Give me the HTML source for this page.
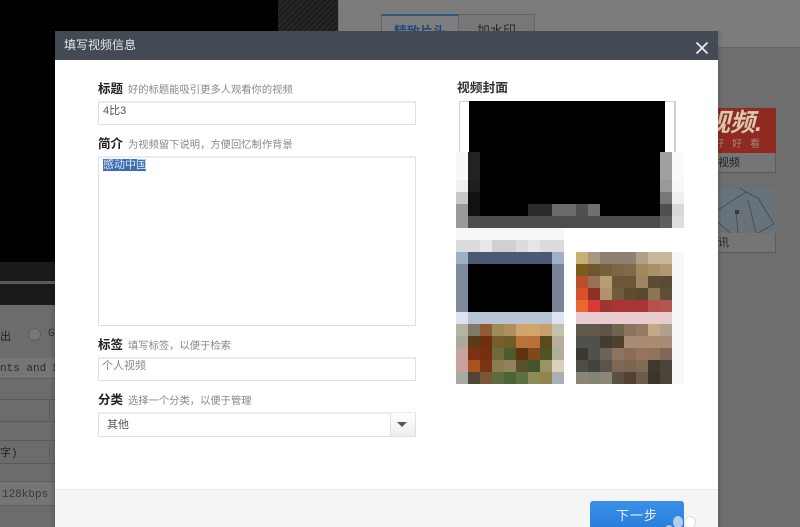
<!DOCTYPE html>
<html><head><meta charset="utf-8"><style>
html,body{margin:0;padding:0;width:800px;height:527px;overflow:hidden;background:#6e6e6e}
*{box-sizing:border-box}
body{font-family:"Liberation Sans","WenQuanYi Zen Hei","Noto Sans CJK SC",sans-serif}
#w{position:relative;width:800px;height:527px;overflow:hidden}
.a{position:absolute}
.lbl{position:absolute;left:98px;font-size:12.5px;line-height:16px;font-weight:bold;color:#222;white-space:nowrap;font-family:"Liberation Sans","Noto Sans CJK SC",sans-serif}
.hint{position:absolute;font-size:10.3px;line-height:14px;color:#888;white-space:nowrap}
.box{position:absolute;left:98px;width:318px;background:#fff;border:1px solid #e0e0e0;border-top:2px solid #ececec;font-size:11px;color:#555}
.mono{font-family:"Liberation Mono","WenQuanYi Zen Hei",monospace;font-size:11px;color:#2a2a2a;white-space:nowrap}
</style></head><body><div id="w">
<!-- background -->
<div class="a" style="left:0;top:0;width:800px;height:47px;background:#7c7c7c"></div>
<div class="a" style="left:338px;top:47px;width:462px;height:1px;background:#666"></div>
<div class="a" style="left:0;top:0;width:278px;height:262px;background:#000"></div>
<div class="a" style="left:278px;top:0;width:60px;height:262px;background:repeating-linear-gradient(135deg,#1c1c1c 0 2px,#262626 2px 4px)"></div>
<div class="a" style="left:338px;top:0;width:1px;height:48px;background:#6e6e6e"></div>
<div class="a" style="left:0;top:262px;width:338px;height:43px;background:#1a1a1c"></div>
<div class="a" style="left:0;top:281px;width:338px;height:3px;background:#5a5a5a"></div>
<div class="a" style="left:381px;top:14px;width:78px;height:34px;border:1px solid #666;border-top:2px solid #2f5a86;background:#7e7e7e;text-align:center;font-size:13px;line-height:32px;color:#1f4a78;font-weight:bold">精致片头</div>
<div class="a" style="left:459px;top:14px;width:76px;height:34px;border:1px solid #666;border-left:0;background:#777;text-align:center;font-size:13px;line-height:32px;color:#2a2a2a">加水印</div>
<!-- right cards -->
<div class="a" style="left:718px;top:108px;width:58px;height:45px;background:#8e2a20;overflow:hidden"><div class="a" style="left:-13px;top:-1px;color:#d9c9b0;font-size:25px;font-style:italic;font-weight:bold;line-height:32px;white-space:nowrap">视频.</div><div class="a" style="left:-4px;top:31px;font-size:10px;line-height:12px;letter-spacing:8px;color:#b08078;white-space:nowrap">好好看</div></div>
<div class="a" style="left:718px;top:153px;width:58px;height:20px;background:#757575;border-bottom:1px solid #5c5c5c;border-right:1px solid #5c5c5c;font-size:11px;line-height:21px;color:#222">视频</div>
<div class="a" style="left:718px;top:188px;width:58px;height:45px;background:#68727a"></div>
<svg class="a" style="left:718px;top:188px" width="58" height="45"><path d="M0 22L28 4L40 10L56 36L40 45M22 0L28 4M18 24L20 45M30 12L38 45M0 34L12 45" stroke="#4a4f55" fill="none"/><rect x="17" y="22" width="4" height="4" fill="#3a3a3a"/></svg>
<div class="a" style="left:718px;top:233px;width:58px;height:20px;background:#757575;border-bottom:1px solid #5c5c5c;border-right:1px solid #5c5c5c;font-size:11px;line-height:21px;color:#222">讯</div>
<!-- left content -->
<div class="a" style="left:0;top:305px;width:55px;height:222px;background:#6c6c6c"></div>
<div class="a mono" style="left:0;top:328px;color:#222">出</div>
<div class="a" style="left:28px;top:328px;width:13px;height:13px;border-radius:50%;background:#777;border:1px solid #5e5e5e"></div>
<div class="a mono" style="left:48px;top:328px;color:#333">G</div>
<div class="a" style="left:0;top:358px;width:55px;height:21px;background:#757575;border-bottom:1px solid #5e5e5e"></div>
<div class="a mono" style="left:0;top:363px;width:55px;overflow:hidden;font-size:11px">nts and S</div>
<div class="a" style="left:0;top:399px;width:55px;height:23px;border-top:1px solid #5a5a5a;border-bottom:1px solid #5a5a5a"></div>
<div class="a" style="left:49px;top:399px;width:1px;height:23px;background:#5a5a5a"></div>
<div class="a" style="left:0;top:440px;width:55px;height:24px;border-top:1px solid #5a5a5a;border-bottom:1px solid #5a5a5a"></div>
<div class="a" style="left:49px;top:440px;width:1px;height:24px;background:#5a5a5a"></div>
<div class="a mono" style="left:0;top:444px;color:#222">字)</div>
<div class="a" style="left:0;top:481px;width:55px;height:25px;background:#757575;border-top:1px solid #5e5e5e;border-bottom:1px solid #5e5e5e"></div>
<div class="a mono" style="left:2px;top:489px;color:#3a3a3a">128kbps (</div>
<div class="a" style="left:50px;top:31px;width:5px;height:496px;background:linear-gradient(90deg,rgba(0,0,0,0),rgba(0,0,0,.12))"></div>
<div class="a" style="left:718px;top:31px;width:5px;height:496px;background:linear-gradient(270deg,rgba(0,0,0,0),rgba(0,0,0,.12))"></div>
<!-- dialog -->
<div class="a" style="left:55px;top:31px;width:663px;height:496px;background:#fff"></div>
<div class="a" style="left:55px;top:31px;width:663px;height:29px;background:#434a54;color:#e6e8ea;font-size:12px;line-height:28px;padding-left:9px">填写视频信息</div>
<svg class="a" style="left:695px;top:41px" width="14" height="14"><path d="M1.5 1.5L12.5 12.5M12.5 1.5L1.5 12.5" stroke="#eef0f2" stroke-width="1.7" fill="none"/></svg>
<div class="a" style="left:55px;top:489px;width:663px;height:38px;background:#f5f5f5;border-top:1px solid #e8e8e8"></div>
<div class="a" style="left:590px;top:501px;width:94px;height:26px;background:linear-gradient(#3a90e8,#2a7fdc);border-radius:3px 3px 0 0;color:#e8f2fc;font-size:13px;line-height:30px;text-align:center;letter-spacing:1px">下一步</div>
<div class="a" style="left:673px;top:516px;width:10px;height:12px;border-radius:50%;background:#b4cdf0"></div>
<div class="a" style="left:684px;top:516px;width:12px;height:13px;border-radius:50%;background:#fff;border:1px solid #ddd"></div>
<div class="a" style="left:666px;top:525px;width:6px;height:4px;border-radius:50%;background:#9cc4f0"></div>
<!-- form -->
<div class="lbl" style="top:81px">标题</div>
<div class="hint" style="left:128px;top:84px">好的标题能吸引更多人观看你的视频</div>
<div class="box" style="top:101px;height:24px;padding:1px 0 0 4px;line-height:14px;font-size:11px">4比3</div>
<div class="lbl" style="top:136px">简介</div>
<div class="hint" style="left:128px;top:139px">为视频留下说明，方便回忆制作背景</div>
<div class="box" style="top:156px;height:170px"></div>
<div class="a" style="left:103px;top:159px;width:43px;height:12px;background:#3b6cb4;color:#dfe8f5;font-size:11px;line-height:12px;white-space:nowrap">感动中国</div>
<div class="lbl" style="top:337px">标签</div>
<div class="hint" style="left:128px;top:340px">填写标签，以便于检索</div>
<div class="box" style="top:357px;height:24px;padding:0 0 0 3px;line-height:14px;color:#888">个人视频</div>
<div class="lbl" style="top:392px">分类</div>
<div class="hint" style="left:128px;top:395px">选择一个分类，以便于管理</div>
<div class="box" style="top:412px;height:25px;padding:4px 0 0 8px;line-height:14px;color:#555">其他</div>
<div class="a" style="left:390px;top:413px;width:25px;height:23px;background:linear-gradient(#fff,#eee);border-left:1px solid #e0e0e0"></div>
<div class="a" style="left:397px;top:422px;width:0;height:0;border:5px solid transparent;border-top:5px solid #555;border-bottom:0"></div>
<!-- cover -->
<div class="a" style="left:457px;top:80px;font-size:12.75px;line-height:16px;font-weight:bold;color:#333;white-space:nowrap;font-family:'Liberation Sans','Noto Sans CJK SC',sans-serif">视频封面</div>
<div class="a" style="left:459px;top:101px;width:217px;height:60px;border:1px solid #d0d0d0;border-bottom:0;border-right:2px solid #d0d0d0;background:#fff"></div>
<div class="a" style="left:469px;top:101px;width:196px;height:60px;background:#000"></div>
<svg class="a" style="left:0;top:0" width="800" height="527" shape-rendering="crispEdges">
<rect x="456" y="152" width="228" height="76" fill="#000"/>
<rect x="456" y="152" width="12" height="28" fill="#f8f8f8"/><rect x="468" y="152" width="12" height="28" fill="#222"/><rect x="660" y="152" width="12" height="28" fill="#a0a0a0"/><rect x="672" y="152" width="12" height="28" fill="#fafafa"/>
<rect x="456" y="180" width="12" height="12" fill="#f0f0f0"/><rect x="468" y="180" width="12" height="12" fill="#1e1e1e"/><rect x="660" y="180" width="12" height="12" fill="#999"/><rect x="672" y="180" width="12" height="12" fill="#f8f8f8"/>
<rect x="456" y="192" width="12" height="12" fill="#c8c8c8"/><rect x="468" y="192" width="12" height="12" fill="#111"/><rect x="660" y="192" width="12" height="12" fill="#777"/><rect x="672" y="192" width="12" height="12" fill="#eee"/>
<rect x="456" y="204" width="12" height="12" fill="#999"/><rect x="468" y="204" width="12" height="12" fill="#111"/><rect x="528" y="204" width="24" height="12" fill="#2a2a2a"/><rect x="552" y="204" width="24" height="12" fill="#6a6a6a"/><rect x="576" y="204" width="12" height="12" fill="#505050"/><rect x="588" y="204" width="12" height="12" fill="#707070"/><rect x="660" y="204" width="12" height="12" fill="#505050"/><rect x="672" y="204" width="12" height="12" fill="#d8d8d8"/>
<rect x="456" y="216" width="228" height="12" fill="#4c4c4c"/><rect x="456" y="216" width="12" height="12" fill="#999"/><rect x="660" y="216" width="12" height="12" fill="#5f5f5f"/><rect x="672" y="216" width="12" height="12" fill="#ddd"/>
<rect x="456" y="228" width="108" height="12" fill="#f6f6f6"/>
<rect x="456" y="240" width="108" height="12" fill="#dcdcdc"/><rect x="480" y="240" width="12" height="12" fill="#e8e8e8"/><rect x="492" y="240" width="24" height="12" fill="#d0d0d0"/><rect x="528" y="240" width="12" height="12" fill="#e6e6e6"/>
<rect x="456" y="252" width="108" height="12" fill="#4a5a74"/><rect x="456" y="252" width="12" height="12" fill="#a0b0c4"/><rect x="552" y="252" width="12" height="12" fill="#a0b0c8"/>
<rect x="456" y="264" width="108" height="48" fill="#000"/><rect x="456" y="264" width="12" height="48" fill="#7f8a9c"/><rect x="552" y="264" width="12" height="48" fill="#7a8496"/>
<rect x="456" y="312" width="108" height="12" fill="#b8c4d4"/><rect x="456" y="312" width="12" height="12" fill="#dde4ee"/><rect x="552" y="312" width="12" height="12" fill="#dde4ee"/>
<rect x="456" y="324" width="12" height="12" fill="#b5b3a3"/><rect x="468" y="324" width="12" height="12" fill="#7d7a68"/><rect x="480" y="324" width="12" height="12" fill="#8f5a34"/><rect x="492" y="324" width="12" height="12" fill="#9b8c5a"/><rect x="504" y="324" width="12" height="12" fill="#b08f5c"/><rect x="516" y="324" width="12" height="12" fill="#d0a56c"/><rect x="528" y="324" width="12" height="12" fill="#d4a568"/><rect x="540" y="324" width="12" height="12" fill="#c8a070"/><rect x="552" y="324" width="12" height="12" fill="#c4c0b0"/>
<rect x="456" y="336" width="12" height="12" fill="#aca99c"/><rect x="468" y="336" width="12" height="12" fill="#5a3d18"/><rect x="480" y="336" width="12" height="12" fill="#6e3010"/><rect x="492" y="336" width="12" height="12" fill="#75602a"/><rect x="504" y="336" width="12" height="12" fill="#6f5c28"/><rect x="516" y="336" width="12" height="12" fill="#b8743a"/><rect x="528" y="336" width="12" height="12" fill="#b87238"/><rect x="540" y="336" width="12" height="12" fill="#5a4a20"/><rect x="552" y="336" width="12" height="12" fill="#b8ac9c"/>
<rect x="456" y="348" width="12" height="12" fill="#c4a49c"/><rect x="468" y="348" width="12" height="12" fill="#7f2f14"/><rect x="480" y="348" width="12" height="12" fill="#76300f"/><rect x="492" y="348" width="12" height="12" fill="#6e6a40"/><rect x="504" y="348" width="12" height="12" fill="#4f5a2c"/><rect x="516" y="348" width="12" height="12" fill="#5c3410"/><rect x="528" y="348" width="12" height="12" fill="#84461c"/><rect x="540" y="348" width="12" height="12" fill="#4e5424"/><rect x="552" y="348" width="12" height="12" fill="#b0ae94"/>
<rect x="456" y="360" width="12" height="12" fill="#c8a09c"/><rect x="468" y="360" width="12" height="12" fill="#a8541e"/><rect x="480" y="360" width="12" height="12" fill="#7a3410"/><rect x="492" y="360" width="12" height="12" fill="#8c7c50"/><rect x="504" y="360" width="12" height="12" fill="#94805c"/><rect x="516" y="360" width="12" height="12" fill="#5a5030"/><rect x="528" y="360" width="12" height="12" fill="#44542a"/><rect x="540" y="360" width="12" height="12" fill="#9c9460"/><rect x="552" y="360" width="12" height="12" fill="#dcd0bc"/>
<rect x="456" y="372" width="12" height="12" fill="#a8a8a4"/><rect x="468" y="372" width="12" height="12" fill="#4e4438"/><rect x="480" y="372" width="12" height="12" fill="#7a5638"/><rect x="492" y="372" width="12" height="12" fill="#5c6c40"/><rect x="504" y="372" width="12" height="12" fill="#4c6434"/><rect x="516" y="372" width="12" height="12" fill="#5c7044"/><rect x="528" y="372" width="12" height="12" fill="#8c8c58"/><rect x="540" y="372" width="12" height="12" fill="#90844f"/><rect x="552" y="372" width="12" height="12" fill="#a8b0b4"/>
<rect x="672" y="252" width="12" height="132" fill="#f8f8f8"/>
<rect x="576" y="252" width="12" height="12" fill="#c8b070"/><rect x="588" y="252" width="12" height="12" fill="#a89880"/><rect x="600" y="252" width="36" height="12" fill="#908074"/><rect x="636" y="252" width="12" height="12" fill="#b0a088"/><rect x="648" y="252" width="12" height="12" fill="#c8b89c"/><rect x="660" y="252" width="12" height="12" fill="#c8b8a0"/>
<rect x="576" y="264" width="12" height="12" fill="#7a5c1c"/><rect x="588" y="264" width="12" height="12" fill="#6f5630"/><rect x="600" y="264" width="12" height="12" fill="#75603c"/><rect x="612" y="264" width="12" height="12" fill="#7a6644"/><rect x="624" y="264" width="12" height="12" fill="#806848"/><rect x="636" y="264" width="12" height="12" fill="#a08860"/><rect x="648" y="264" width="12" height="12" fill="#a89068"/><rect x="660" y="264" width="12" height="12" fill="#b09870"/>
<rect x="576" y="276" width="12" height="12" fill="#b8502a"/><rect x="588" y="276" width="12" height="12" fill="#987058"/><rect x="600" y="276" width="12" height="12" fill="#b89c74"/><rect x="612" y="276" width="24" height="12" fill="#6c5638"/><rect x="636" y="276" width="12" height="12" fill="#9c8464"/><rect x="648" y="276" width="12" height="12" fill="#5c4c34"/><rect x="660" y="276" width="12" height="12" fill="#5a4a34"/>
<rect x="576" y="288" width="12" height="12" fill="#d8502c"/><rect x="588" y="288" width="12" height="12" fill="#8c3024"/><rect x="600" y="288" width="12" height="12" fill="#b09470"/><rect x="612" y="288" width="12" height="12" fill="#705c3c"/><rect x="624" y="288" width="12" height="12" fill="#5c4c30"/><rect x="636" y="288" width="12" height="12" fill="#584830"/><rect x="648" y="288" width="12" height="12" fill="#8c7454"/><rect x="660" y="288" width="12" height="12" fill="#5e5038"/>
<rect x="576" y="300" width="12" height="12" fill="#e86830"/><rect x="588" y="300" width="12" height="12" fill="#d83838"/><rect x="600" y="300" width="12" height="12" fill="#983830"/><rect x="612" y="300" width="36" height="12" fill="#a83438"/><rect x="648" y="300" width="12" height="12" fill="#b85050"/><rect x="660" y="300" width="12" height="12" fill="#b05850"/>
<rect x="576" y="312" width="96" height="12" fill="#e8ccd0"/>
<rect x="576" y="324" width="24" height="12" fill="#60584c"/><rect x="600" y="324" width="12" height="12" fill="#5c5448"/><rect x="612" y="324" width="12" height="12" fill="#706450"/><rect x="624" y="324" width="12" height="12" fill="#887460"/><rect x="636" y="324" width="12" height="12" fill="#947c64"/><rect x="648" y="324" width="12" height="12" fill="#c4a888"/><rect x="660" y="324" width="12" height="12" fill="#b0a08c"/>
<rect x="576" y="336" width="24" height="12" fill="#50504c"/><rect x="600" y="336" width="12" height="12" fill="#443c30"/><rect x="612" y="336" width="12" height="12" fill="#504030"/><rect x="624" y="336" width="48" height="12" fill="#a88c74"/>
<rect x="576" y="348" width="12" height="12" fill="#3c3830"/><rect x="588" y="348" width="12" height="12" fill="#50504c"/><rect x="600" y="348" width="12" height="12" fill="#6c6454"/><rect x="612" y="348" width="12" height="12" fill="#8c7460"/><rect x="624" y="348" width="12" height="12" fill="#8c6c58"/><rect x="636" y="348" width="12" height="12" fill="#94745c"/><rect x="648" y="348" width="12" height="12" fill="#907458"/><rect x="660" y="348" width="12" height="12" fill="#806858"/>
<rect x="576" y="360" width="12" height="12" fill="#4c4c48"/><rect x="588" y="360" width="12" height="12" fill="#44443c"/><rect x="600" y="360" width="12" height="12" fill="#5c544c"/><rect x="612" y="360" width="12" height="12" fill="#7c6854"/><rect x="624" y="360" width="12" height="12" fill="#7c6450"/><rect x="636" y="360" width="12" height="12" fill="#806c54"/><rect x="648" y="360" width="12" height="12" fill="#40382c"/><rect x="660" y="360" width="12" height="12" fill="#4c4438"/>
<rect x="576" y="372" width="12" height="12" fill="#8c8474"/><rect x="588" y="372" width="12" height="12" fill="#848474"/><rect x="600" y="372" width="12" height="12" fill="#8c8878"/><rect x="612" y="372" width="12" height="12" fill="#5c5040"/><rect x="624" y="372" width="12" height="12" fill="#544030"/><rect x="636" y="372" width="12" height="12" fill="#6c5c4c"/><rect x="648" y="372" width="12" height="12" fill="#3c342c"/><rect x="660" y="372" width="12" height="12" fill="#4c4436"/>
</svg>
</div></body></html>
